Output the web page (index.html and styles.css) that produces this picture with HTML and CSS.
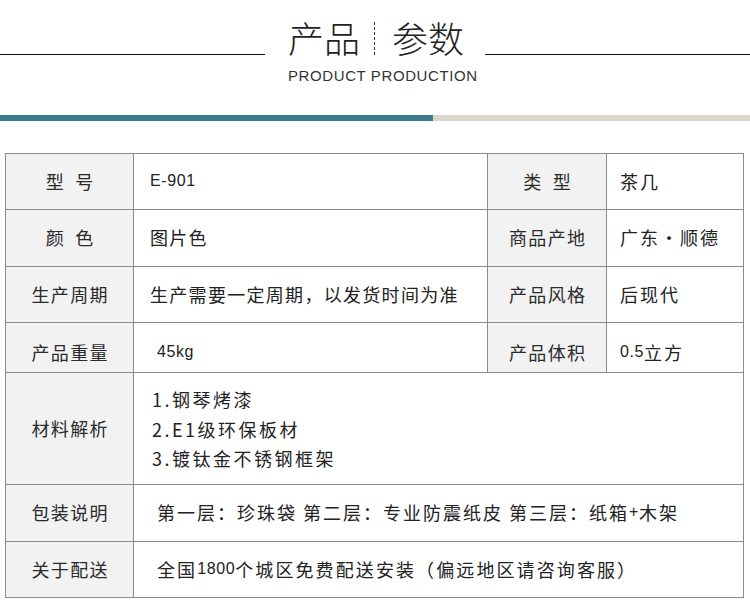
FILE: index.html
```html
<!DOCTYPE html>
<html lang="zh-CN">
<head>
<meta charset="utf-8">
<title>产品参数</title>
<link rel="stylesheet" href="styles.css">
</head>
<body>
<header class="head">
  <div class="title-row">
    <span class="rule"></span>
    <h1 class="title"><span class="tw">产品</span><i class="sep"></i><span class="tw">参数</span></h1>
    <span class="rule"></span>
  </div>
  <p class="subtitle">PRODUCT PRODUCTION</p>
</header>
<div class="bar"><span class="bar-teal"></span><span class="bar-sand"></span></div>
<section class="specs">
  <div class="k">型&ensp;号</div>
  <div class="v"><span class="lat">E-901</span></div>
  <div class="k">类&ensp;型</div>
  <div class="v v4">茶几</div>

  <div class="k">颜&ensp;色</div>
  <div class="v">图片色</div>
  <div class="k">商品产地</div>
  <div class="v v4">广东・顺德</div>

  <div class="k">生产周期</div>
  <div class="v">生产需要一定周期，以发货时间为准</div>
  <div class="k">产品风格</div>
  <div class="v v4">后现代</div>

  <div class="k r4">产品重量</div>
  <div class="v in r4"><span class="lat">45kg</span></div>
  <div class="k r4">产品体积</div>
  <div class="v v4 r4"><span class="lat">0.5</span>立方</div>

  <div class="k">材料解析</div>
  <div class="v wide mat">
    <p>1.钢琴烤漆</p>
    <p>2.E1级环保板材</p>
    <p>3.镀钛金不锈钢框架</p>
  </div>

  <div class="k">包装说明</div>
  <div class="v wide in tight">第一层：珍珠袋 第二层：专业防震纸皮 第三层：纸箱<span class="lat">+</span>木架</div>

  <div class="k">关于配送</div>
  <div class="v wide in tight wider">全国<span class="lat">1800</span>个城区免费配送安装（偏远地区请咨询客服）</div>
</section>
</body>
</html>
```
FILE: styles.css
```css
* { box-sizing: border-box; }
html, body { margin: 0; padding: 0; background: #fff; }
body {
  width: 750px;
  font-family: "Noto Sans CJK SC", "Liberation Sans", sans-serif;
  color: #222;
}

.head {
  height: 115px;
  padding-top: 19px;
}
.title-row {
  display: flex;
  align-items: flex-end;
  height: 36px;
}
.rule {
  flex: 1;
  height: 1px;
  background: #111;
}
.title {
  margin: 0;
  width: 220px;
  display: flex;
  align-items: flex-end;
  padding-left: 23px;
  font-size: 36px;
  line-height: 36px;
  font-weight: 300;
  color: #222;
}
.tw { display: block; }
.sep {
  display: block;
  width: 0;
  height: 33px;
  border-left: 1px dashed #333;
  margin: 0 17px 0 14px;
}
.subtitle {
  margin: 13px 0 0;
  width: 220px;
  margin-left: 265px;
  padding-left: 23px;
  font-family: "Liberation Sans", Arial, sans-serif;
  font-size: 15px;
  line-height: 15px;
  letter-spacing: 0.6px;
  color: #333;
}

.bar {
  display: flex;
  height: 6px;
}
.bar-teal { width: 433px; background: #3b7b8b; }
.bar-sand { flex: 1; background: #dcd5ca; }

.specs {
  margin: 32px 0 0 5px;
  width: 739px;
  display: grid;
  grid-template-columns: 127px 353px 118px 136px;
  grid-template-rows: 55px 56px 55px 49px 111px 56px 55px;
  gap: 1px;
  background: #8a8a8a;
  border: 1px solid #8a8a8a;
  font-size: 18px;
  line-height: 18px;
}
.k {
  background: #f2f2f2;
  display: flex;
  align-items: center;
  justify-content: center;
  letter-spacing: 1.3px;
  padding-left: 1.3px;
  padding-bottom: 2px;
  color: #2a2a2a;
}
.v {
  background: #fff;
  display: flex;
  align-items: center;
  padding-left: 16px;
  padding-bottom: 2px;
  letter-spacing: 1.3px;
  white-space: nowrap;
}
.r4 { padding-top: 8px; padding-bottom: 0; }
.v4 { padding-left: 13px; letter-spacing: 2px; }
.in { padding-left: 23px; }
.wide { grid-column: span 3; }
.tight { letter-spacing: 2px; }
.wider { letter-spacing: 2.1px; }
.mat {
  flex-direction: column;
  align-items: flex-start;
  justify-content: center;
  padding: 2px 0 0 18px;
  letter-spacing: 2.5px;
}
.mat p { margin: 0; line-height: 29.5px; }
.lat {
  font-family: "Liberation Sans", Arial, sans-serif;
  font-size: 16px;
  letter-spacing: 0.6px;
}
```
